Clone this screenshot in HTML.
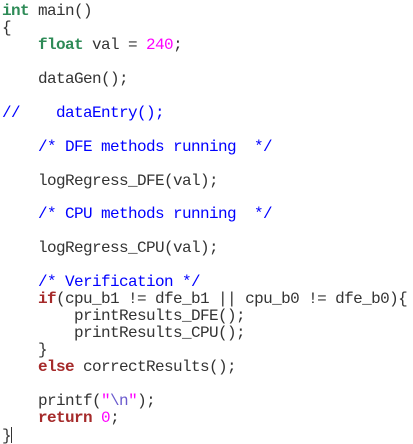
<!DOCTYPE html>
<html><head><style>
html,body{margin:0;padding:0;background:#fff;width:413px;height:444px;overflow:hidden}
pre{margin:0;padding:3px 0 0 2px;font-family:"Liberation Mono",monospace;font-size:16px;line-height:16.95px;color:#333;letter-spacing:-0.6px}
.k{color:#2e8b57;font-weight:bold}
.r{color:#a52a2a;font-weight:bold}
.n{color:#ff00ff}
.c{color:#0000ff}
.s{color:#ff00ff}
.e{color:#6a5acd}
.cur{display:inline-block;width:1px;height:16px;background:#333;vertical-align:-3px}
</style></head><body><pre><span class="k">int</span> main()
{
    <span class="k">float</span> val = <span class="n">240</span>;

    dataGen();

<span class="c">//    dataEntry();</span>

    <span class="c">/* DFE methods running  */</span>

    logRegress_DFE(val);

    <span class="c">/* CPU methods running  */</span>

    logRegress_CPU(val);

    <span class="c">/* Verification */</span>
    <span class="r">if</span>(cpu_b1 != dfe_b1 || cpu_b0 != dfe_b0){
        printResults_DFE();
        printResults_CPU();
    }
    <span class="r">else</span> correctResults();

    printf(<span class="s">"</span><span class="e">\n</span><span class="s">"</span>);
    <span class="r">return</span> <span class="n">0</span>;
}<span class="cur"></span></pre></body></html>
